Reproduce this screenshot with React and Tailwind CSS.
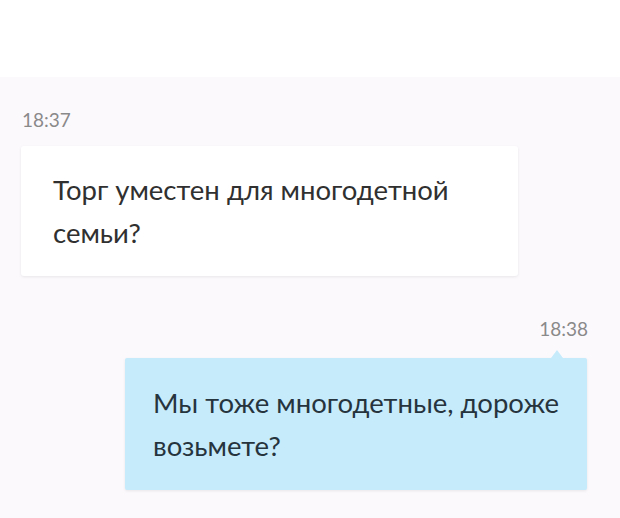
export default function App() {
  return (
    <div className="w-[620px] h-[518px] overflow-hidden bg-[#fcf9fd] font-['Lato','Noto_Sans',sans-serif]">
      <div className="h-[77px] bg-white" />
      <div className="flex flex-col">
        <div className="mt-[32px] ml-[22px] text-[19px] leading-[22px] text-[#8a8a8a]">
          18:37
        </div>
        <div className="mt-[15px] ml-[21px] w-[497px] bg-white rounded-[3px] pl-[32px] pr-[16px] py-[22px] text-[27.5px] leading-[43px] text-[#303030] shadow-[0_1px_3px_rgba(0,0,0,0.08)]">
          Торг уместен для многодетной семьи?
        </div>
        <div className="mt-[42px] mr-[32px] self-end text-[19px] leading-[22px] text-[#8a8a8a]">
          18:38
        </div>
        <div className="relative mt-[18px] ml-[125px] w-[462px] bg-[#c6ebfb] rounded-[2px] pl-[28px] pr-[16px] py-[23px] text-[27.5px] leading-[43px] text-[#26343e] shadow-[0_1px_3px_rgba(0,0,0,0.08)]">
          <span className="absolute -top-[8px] right-[24px] w-0 h-0 border-l-[6px] border-r-[6px] border-b-[8px] border-l-transparent border-r-transparent border-b-[#c6ebfb]" />
          Мы тоже многодетные, дороже возьмете?
        </div>
      </div>
    </div>
  );
}
